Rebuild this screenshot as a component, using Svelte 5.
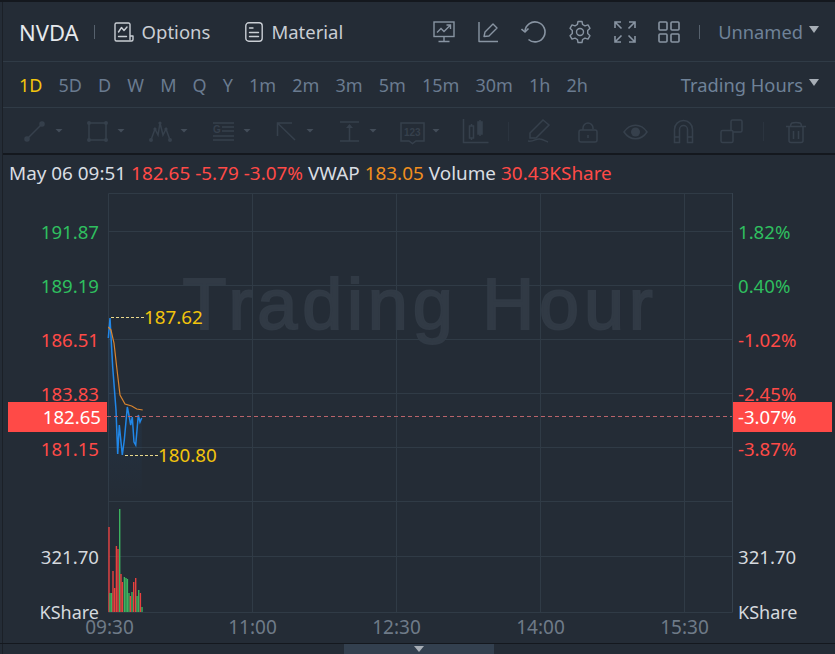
<script>
    const periods = ["1D", "5D", "D", "W", "M", "Q", "Y", "1m", "2m", "3m", "5m", "15m", "30m", "1h", "2h"];

    const gridY = [231, 285, 339, 393, 447, 501, 556];
    const gridX = [252, 396, 540, 684];

    const leftScale = [
        { v: "191.87", y: 232, c: "up" },
        { v: "189.19", y: 286, c: "up" },
        { v: "186.51", y: 340, c: "down" },
        { v: "183.83", y: 394, c: "down" },
        { v: "181.15", y: 449, c: "down" },
    ];
    const rightScale = [
        { v: "1.82%", y: 232, c: "up" },
        { v: "0.40%", y: 286, c: "up" },
        { v: "-1.02%", y: 340, c: "down" },
        { v: "-2.45%", y: 394, c: "down" },
        { v: "-3.87%", y: 449, c: "down" },
    ];
    const times = [
        { t: "09:30", x: 109.5 },
        { t: "11:00", x: 252.5 },
        { t: "12:30", x: 396.5 },
        { t: "14:00", x: 540.5 },
        { t: "15:30", x: 684.5 },
    ];

    // x, top of bar, colour key
    const volume = [
        [108.3, 527, "r"], [109.3, 593, "g"], [110.8, 593, "g"], [112.3, 571, "r"], [114, 588, "r"], [115.7, 546, "r"],
        [117.3, 549, "r"], [119, 509, "g"], [120.3, 574, "r"], [121.7, 582, "r"], [123.7, 577, "g"], [125.3, 578, "g"],
        [126.7, 579, "g"], [128.3, 593, "g"], [129.7, 596, "r"], [131.3, 592, "g"], [133, 582, "r"], [135, 578, "r"],
        [136.3, 596, "g"], [138, 590, "g"], [139.7, 593, "r"], [141.3, 607, "g"],
    ];

    const caretsX = [59, 121, 184, 247, 310, 373, 436];
</script>

<div class="terminal">
    <header class="top">
        <div class="group">
            <span class="symbol">NVDA</span>
            <i class="sep"></i>
            <span class="link">
                <svg width="20" height="20" viewBox="0 0 20 20" fill="none" stroke="currentColor" stroke-width="1.4" stroke-linejoin="round" stroke-linecap="round">
                    <path d="M16 14V2.500A1.500 1.500 0 0 0 14.500 1h-12A1.500 1.500 0 0 0 1 2.500v15A1.500 1.500 0 0 0 2.500 19h15a1.500 1.500 0 0 0 1.500-1.500V14h-3v3.500" />
                    <path d="M4.500 10l3-4.500 2.500 3 3-3.500M4.500 14.500h8" />
                </svg>
                Options
            </span>
            <span class="link">
                <svg width="18" height="20" viewBox="0 0 18 20" fill="none" stroke="currentColor" stroke-width="1.4" stroke-linecap="round">
                    <rect x="0.800" y="0.800" width="16.400" height="18.400" rx="3" />
                    <path d="M4.500 6h3.500M4.500 10.500h9M4.500 14.500h9" />
                </svg>
                Material
            </span>
        </div>
        <div class="group tools">
            <svg width="22" height="22" viewBox="0 0 22 22" fill="none" stroke="currentColor" stroke-width="1.4">
                <rect x="1" y="1" width="20" height="14.500" />
                <path d="M4 11.500l4-4 3 3 6-6M13.500 4H17.500V8M11 15.500V20.500M5.500 20.500h11" />
            </svg>
            <svg width="22" height="22" viewBox="0 0 22 22" fill="none" stroke="currentColor" stroke-width="1.4" stroke-linejoin="round">
                <path d="M2 1v19.500h19" />
                <path d="M7 15.500l1-4.500 8-8 4 4-8 8z" />
            </svg>
            <svg width="25" height="22" viewBox="0 0 25 22" fill="none" stroke="currentColor" stroke-width="1.6">
                <path d="M7.500 18.500a10 10 0 1 0-3.500-8" />
                <path d="M0.500 8l3.500 3 3.500-3.500" />
            </svg>
            <svg width="24" height="24" viewBox="0 0 24 24" fill="none" stroke="currentColor" stroke-width="1.4" stroke-linejoin="round">
                <circle cx="12" cy="12" r="3.500" />
                <path d="M10 1.500h4l.6 3 2.400 1.400 3-1 2 3.400-2.300 2.100v3.200l2.300 2.100-2 3.400-3-1-2.400 1.400-.6 3h-4l-.6-3L7 18.100l-3 1-2-3.400 2.300-2.100v-3.200L2 8.300l2-3.400 3 1 2.400-1.400z" />
            </svg>
            <svg width="22" height="22" viewBox="0 0 22 22" fill="none" stroke="currentColor" stroke-width="1.6">
                <path d="M1 7V1h6M1 1l6.500 6.500M15 1h6v6M21 1l-6.500 6.500M1 15v6h6M1 21l6.500-6.500M21 15v6h-6M21 21l-6.500-6.500" />
            </svg>
            <svg width="22" height="22" viewBox="0 0 22 22" fill="none" stroke="currentColor" stroke-width="1.6">
                <rect x="1" y="1" width="8" height="8" rx="1" />
                <rect x="13" y="1" width="8" height="8" rx="1" />
                <rect x="1" y="13" width="8" height="8" rx="1" />
                <rect x="13" y="13" width="8" height="8" rx="1" />
            </svg>
            <i class="sep"></i>
            <span class="select">Unnamed<b class="caret"></b></span>
        </div>
    </header>

    <nav class="periods">
        <div class="period-list">
            {#each periods as p, i}
                <span class:active={i === 0}>{p}</span>
            {/each}
        </div>
        <span class="select">Trading Hours<b class="caret"></b></span>
    </nav>

    <div class="drawbar">
        <svg width="832" height="40" viewBox="3 110 832 40" fill="none" stroke="#36404c" stroke-width="1.500">
            {#each caretsX as x}
                <path d="M{x - 3.500} 128h7l-3.500 3.500z" fill="#434d59" stroke="none" />
            {/each}

            <path d="M27 138L42 123" />
            <circle cx="27" cy="138" r="2" fill="#36404c" /><circle cx="42" cy="123" r="2" fill="#36404c" />

            <rect x="89" y="122" width="17" height="17" />
            <g fill="#36404c" stroke="none">
                <circle cx="89" cy="122" r="2" /><circle cx="106" cy="122" r="2" /><circle cx="89" cy="139" r="2" /><circle cx="106" cy="139" r="2" />
            </g>

            <path d="M151 139l4-11 3 6 2-12 3 12 3-6 4 11" />
            <g fill="#36404c" stroke="none">
                <circle cx="151" cy="139" r="2" /><circle cx="155" cy="128" r="1.600" /><circle cx="160" cy="122" r="1.600" /><circle cx="166" cy="128" r="1.600" /><circle cx="170" cy="139" r="2" />
            </g>

            <path d="M213 122h21M222 126h12M222 130h12M213 135h21M213 139h21" />
            <text x="213" y="132" class="tiny">G</text>

            <path d="M295 139L277.500 122M277.500 135V122H292" />

            <path d="M340 121h19M340 140h19M349.500 124v16" />
            <path d="M346 127l3.500-4 3.500 4z" fill="#36404c" stroke="none" />

            <path d="M401 122h23v18h-8l-3.500 2.500-3.500-2.500h-8z" />
            <text x="404" y="135" class="tiny">123</text>

            <path d="M463.500 118v23.500h25" />
            <path d="M471.500 123v16M480 119v16" />
            <rect x="469.500" y="125" width="4" height="12" fill="#242c36" />
            <rect x="478" y="121" width="4" height="12" fill="#36404c" />
            <line x1="508.500" x2="508.500" y1="121" y2="140" stroke="#2b343f" stroke-width="1" />

            <path d="M530 137v-5l13-13 6 5-13 13z" />
            <path d="M528 140c6 1 8-3 12-2 3 .5 5 2 8 3" />

            <rect x="579" y="129" width="18" height="12" rx="2" />
            <path d="M583 129v-2a5 5 0 0 1 10 0v1M588 134v3" />

            <path d="M624 131c6-9 17-9 23 0-6 9-17 9-23 0z" />
            <circle cx="635.500" cy="131" r="4.500" fill="#36404c" stroke="none" />

            <path d="M674.500 141.500V128.500a9 9 0 0 1 18 0v13h-5V128.500a4 4 0 0 0-8 0v13zM674.500 136h5M687.500 136h5" />

            <rect x="721" y="129.500" width="12" height="12" rx="1.500" />
            <path d="M731 129.500v-9a1.500 1.500 0 0 1 1.500-1.500h8a1.500 1.500 0 0 1 1.500 1.500v9a1.500 1.500 0 0 1-1.500 1.500h-7.500" />
            <line x1="763.500" x2="763.500" y1="121" y2="140" stroke="#2b343f" stroke-width="1" />

            <path d="M786 125.500h20M790.500 125.500c0-4 2-4 5.500-4s5.500 0 5.500 4M789 125.500v14a2 2 0 0 0 2 2h10a2 2 0 0 0 2-2v-14M793.500 130v8M798.500 130v8" />
        </svg>
    </div>

    <div class="info">
        <span>May 06 09:51</span>
        <span class="down">182.65</span>
        <span class="down">-5.79</span>
        <span class="down">-3.07%</span>
        <span>VWAP</span>
        <span class="avg">183.05</span>
        <span>Volume</span>
        <span class="down">30.43KShare</span>
    </div>

    <div class="chart">
        <svg width="835" height="453" viewBox="0 190 835 453" class="plot">
            <defs>
                <linearGradient id="fade" x1="0" y1="0" x2="0" y2="1">
                    <stop offset="0" stop-color="#1f7ad8" stop-opacity="0.14" />
                    <stop offset="1" stop-color="#1f7ad8" stop-opacity="0" />
                </linearGradient>
            </defs>

            <text x="420" y="329" class="watermark">Trading Hour</text>

            <g class="grid">
                <path d="M108.500 193.500H732.500V612.500H108.500Z" />
                {#each gridY as y}
                    <line x1="108" x2="732" y1={y + 0.5} y2={y + 0.5} />
                {/each}
                {#each gridX as x}
                    <line x1={x + 0.5} x2={x + 0.5} y1="193" y2="612" />
                {/each}
            </g>
            <line x1="732.500" x2="732.500" y1="193" y2="612" class="axis" />

            <path d="M108.300 338L110 318L112.700 367L116 410L117.700 454L119.300 425L122.300 455L124.300 440L127.300 407L129.300 417L130.700 425L132.300 417L134 442L135.700 445L138.300 415L140 422L141.700 418V500H108.300Z" fill="url(#fade)" />
            <path d="M108.300 338L110 318L112.700 367L116 410L117.700 454L119.300 425L122.300 455L124.300 440L127.300 407L129.300 417L130.700 425L132.300 417L134 442L135.700 445L138.300 415L140 422L141.700 418" fill="none" stroke="#2187e8" stroke-width="1.500" />
            <path d="M108.300 327L111 330L114 343L116.700 367L120 395L125 404L131.700 406L136.700 409L142.700 410" fill="none" stroke="#d8842f" stroke-width="1.200" />

            <line x1="111" x2="144" y1="317.500" y2="317.500" class="dash-hi" />
            <line x1="125" x2="158" y1="455.500" y2="455.500" class="dash-hi" />
            <text x="144" y="324" class="extreme">187.62</text>
            <text x="158" y="462" class="extreme">180.80</text>

            <line x1="107" x2="732" y1="416.500" y2="416.500" class="last" />

            <g class="labels">
                {#each leftScale as s}
                    <text x="99" y={s.y + 7} text-anchor="end" class={s.c}>{s.v}</text>
                {/each}
                {#each rightScale as s}
                    <text x="738" y={s.y + 7} class={s.c}>{s.v}</text>
                {/each}
                <text x="99" y="564" text-anchor="end" class="vol">321.70</text>
                <text x="738" y="564" class="vol">321.70</text>
                <text x="99" y="619" text-anchor="end" class="vol unit">KShare</text>
                <text x="738" y="619" class="vol unit">KShare</text>
                {#each times as t}
                    <text x={t.x} y="634" text-anchor="middle" class="time">{t.t}</text>
                {/each}
            </g>

            <g>
                {#each volume as [x, y, k]}
                    <rect x={x} y={y} width="1.400" height={612 - y} fill={k === "r" ? "#e8413f" : "#3cb35f"} />
                {/each}
            </g>

            <rect x="8" y="402" width="99" height="30" fill="#ff4a47" />
            <text x="101" y="424" text-anchor="end" class="tag">182.65</text>
            <rect x="733" y="402" width="99" height="30" fill="#ff4a47" />
            <text x="738" y="424" class="tag">-3.07%</text>
        </svg>
    </div>

    <footer class="foot">
        <div class="handle"><b></b></div>
    </footer>
</div>

<style>
    :global(body) {
        background: #242c36;
    }

    .terminal {
        width: 835px;
        height: 654px;
        box-sizing: border-box;
        background: linear-gradient(to right, transparent 2px, #1b2027 2px, #1b2027 3px, transparent 3px), #242c36;
        border-top: 2px solid #14181e;
        font-family: "Noto Sans", "Open Sans", sans-serif;
        color: #d9dde2;
        overflow: hidden;
        display: flex;
        flex-direction: column;
    }

    .top {
        height: 59px;
        flex: none;
        margin-left: 3px;
        padding: 0 16px 0 16px;
        display: flex;
        align-items: center;
        justify-content: space-between;
        border-bottom: 1px solid #303b46;
    }

    .group {
        display: flex;
        align-items: center;
    }

    .symbol {
        font-size: 22px;
        color: #e6e9ec;
    }

    .sep {
        width: 1px;
        height: 14px;
        background: #56616d;
        margin: 0 19px 0 15px;
    }

    .link {
        display: flex;
        align-items: center;
        gap: 8px;
        font-size: 18.500px;
        color: #c9ced4;
        margin-right: 35px;
    }

    .tools {
        color: #8894a2;
        gap: 22px;
    }

    .tools .sep {
        margin: 0 -4px 0 -3px;
    }

    .select {
        font-size: 18.300px;
        color: #6f8298;
        display: flex;
        align-items: center;
    }

    .caret {
        width: 0;
        height: 0;
        margin-left: 6px;
        margin-top: -5px;
        border-left: 5px solid transparent;
        border-right: 5px solid transparent;
        border-top: 7px solid #a7aeb6;
    }

    .periods {
        height: 45px;
        flex: none;
        margin-left: 3px;
        padding: 0 16px 0 16px;
        display: flex;
        align-items: center;
        justify-content: space-between;
        border-bottom: 1px solid #303b46;
    }

    .period-list {
        display: flex;
        gap: 16.100px;
        font-size: 18px;
        color: #6a7b90;
    }

    .active {
        color: #f2c40d;
    }

    .drawbar {
        height: 45px;
        flex: none;
        margin-left: 3px;
        box-sizing: border-box;
        box-shadow: 0 2px 0 #14181e;
        display: flex;
        align-items: center;
    }

    .tiny {
        font-family: "Liberation Sans", sans-serif;
        font-size: 10px;
        font-weight: 700;
        fill: #36404c;
        stroke: none;
    }

    .info {
        height: 35px;
        flex: none;
        margin-top: 2px;
        margin-left: 3px;
        padding-left: 6px;
        display: flex;
        align-items: center;
        gap: 5px;
        font-size: 18.900px;
        color: #d9dde2;
    }

    .info .down {
        color: #ff4a47;
    }

    .info .avg {
        color: #f08f1f;
    }

    .chart {
        height: 453px;
        flex: none;
    }

    .plot {
        display: block;
        font-family: "Noto Sans", "Open Sans", sans-serif;
    }

    .grid path,
    .grid line {
        fill: none;
        stroke: #303b46;
        stroke-width: 1;
    }

    .axis {
        stroke: #36424e;
    }

    .watermark {
        font-size: 72px;
        text-anchor: middle;
        fill: #313a45;
        stroke: #313a45;
        stroke-width: 2px;
        font-family: "Liberation Sans", sans-serif;
        letter-spacing: 4.800px;
    }

    .dash-hi {
        stroke: #ead98c;
        stroke-dasharray: 3 2;
    }

    .extreme {
        font-size: 18.800px;
        fill: #f2c40d;
    }

    .last {
        stroke: #b9636a;
        stroke-dasharray: 4 3;
    }

    .labels text {
        font-size: 18.600px;
    }

    .labels .unit {
        font-size: 18px;
    }

    .up {
        fill: #2fbf5f;
    }

    .down {
        fill: #ff4a47;
    }

    .vol {
        fill: #d5d9de;
    }

    .labels .time {
        fill: #6f7b88;
        font-size: 19px;
    }

    .tag {
        font-size: 18.600px;
        fill: #ffffff;
    }

    .foot {
        flex: 1;
        border-top: 1px solid #14181e;
        position: relative;
    }

    .handle {
        position: absolute;
        left: 344px;
        top: 0;
        width: 150px;
        height: 12px;
        background: #33404f;
        display: flex;
        justify-content: center;
    }

    .handle b {
        width: 0;
        height: 0;
        margin-top: 2px;
        border-left: 5px solid transparent;
        border-right: 5px solid transparent;
        border-top: 6px solid #a7aeb6;
    }
</style>
